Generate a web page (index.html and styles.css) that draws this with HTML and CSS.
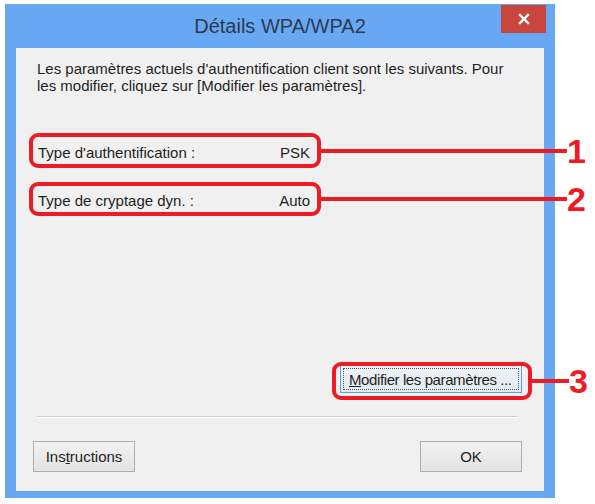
FILE: index.html
```html
<!DOCTYPE html>
<html lang="fr">
<head>
<meta charset="utf-8">
<title>Détails WPA/WPA2</title>
<link rel="stylesheet" href="styles.css">
</head>
<body>
<div class="stage">
  <div class="window">
    <div class="titlebar">
      <span class="title">Détails WPA/WPA2</span>
      <span class="close" aria-label="Fermer">
        <svg width="12" height="12" viewBox="0 0 12 12"><path d="M2 2 L10 10 M10 2 L2 10" stroke="#fff" stroke-width="2.4" stroke-linecap="square"/></svg>
      </span>
    </div>
    <div class="client">
      <p class="intro">Les paramètres actuels d'authentification client sont les suivants. Pour<br>les modifier, cliquez sur [Modifier les paramètres].</p>
      <div class="fields">
        <div class="field"><span>Type d'authentification :</span><span>PSK</span></div>
        <div class="field"><span>Type de cryptage dyn. :</span><span>Auto</span></div>
      </div>
      <div class="modify-row">
        <button class="btn btn-default"><span class="focus"><u>M</u>odifier les paramètres ...</span></button>
      </div>
      <div class="sep"></div>
      <div class="actions">
        <button class="btn">Ins<u>t</u>ructions</button>
        <button class="btn">OK</button>
      </div>
    </div>
  </div>

  <div class="callout c1"><span class="ring r1"></span><span class="leader l1"></span><span class="num">1</span></div>
  <div class="callout c2"><span class="ring r2"></span><span class="leader l2"></span><span class="num">2</span></div>
  <div class="callout c3"><span class="ring r3"></span><span class="leader l3"></span><span class="num">3</span></div>
</div>
</body>
</html>
```
FILE: styles.css
```css
* { box-sizing: border-box; }

html, body {
  margin: 0;
  padding: 0;
  background: #ffffff;
}

body {
  font-family: "Liberation Sans", Arial, sans-serif;
  color: #1f1f1f;
}

.stage {
  position: relative;
  width: 595px;
  height: 504px;
  padding: 4px 0 0 5px;
}

.window {
  width: 550px;
  height: 494px;
  background: #68a8f2;
  padding: 0 11px 7px 11px;
  display: flex;
  flex-direction: column;
}

.titlebar {
  height: 44px;
  margin: 0 -11px;
  display: grid;
  grid-template-columns: 1fr auto 1fr;
  align-items: start;
}

.title {
  grid-column: 2;
  font-size: 20px;
  line-height: 44px;
  color: #2a3c52;
  white-space: nowrap;
}

.close {
  grid-column: 3;
  justify-self: end;
  width: 45px;
  height: 28px;
  margin: 1px 9px 0 0;
  background: #c9463d;
  display: flex;
  align-items: center;
  justify-content: center;
}

.client {
  flex: 1;
  background: #f0f0f0;
  display: flex;
  flex-direction: column;
  padding: 12px 22px 19px 21px;
}

.intro {
  margin: 0;
  font-size: 15px;
  line-height: 17px;
  white-space: nowrap;
}

.fields {
  margin-top: 46px;
  display: flex;
  flex-direction: column;
  gap: 24px;
}

.field {
  width: 272px;
  height: 24px;
  margin-left: 1px;
  display: flex;
  justify-content: space-between;
  align-items: center;
  font-size: 15px;
}

.modify-row {
  margin-top: auto;
  display: flex;
  justify-content: flex-end;
}

.btn {
  font-family: "Liberation Sans", Arial, sans-serif;
  font-size: 15px;
  color: #1f1f1f;
  width: 102px;
  height: 31px;
  padding: 0;
  border: 1px solid #adadad;
  background: linear-gradient(#f2f2f2, #e3e3e3);
  display: flex;
  align-items: center;
  justify-content: center;
}

.btn-default {
  width: 182px;
  height: 28px;
  padding: 2px;
  border-color: #5d9fdc;
  background: linear-gradient(#eef3f8, #e2e9f0);
}

.btn-default .focus {
  flex: 1;
  align-self: stretch;
  display: flex;
  align-items: center;
  padding-left: 5px;
  border: 1px dotted #555;
  letter-spacing: -0.4px;
  white-space: nowrap;
}

.sep {
  margin: 23px 5px 0 0;
  height: 2px;
  border-top: 1px solid #cdcdcd;
  border-bottom: 1px solid #ffffff;
}

.actions {
  margin: 23px 0 0 -4px;
  display: flex;
  justify-content: space-between;
}

/* Annotation callouts drawn over the dialog */
.callout {
  position: absolute;
  display: flex;
  align-items: center;
}

.c1 { left: 29px; top: 133px; }
.c2 { left: 29px; top: 182px; }
.c3 { left: 332px; top: 362px; }

.ring {
  display: block;
  border: 4px solid #ec1c24;
  border-radius: 9px;
}

.r1 { width: 292px; height: 35px; }
.r2 { width: 292px; height: 34px; }
.r3 { width: 200px; height: 38px; }

.leader {
  display: block;
  height: 4px;
  background: #ec1c24;
}

.l1, .l2 { width: 246px; }
.l3 { width: 37px; }

.num {
  font-family: "Liberation Sans", Arial, sans-serif;
  font-weight: bold;
  font-size: 34px;
  line-height: 30px;
  color: #ec1c24;
  margin-left: 0;
}
```
